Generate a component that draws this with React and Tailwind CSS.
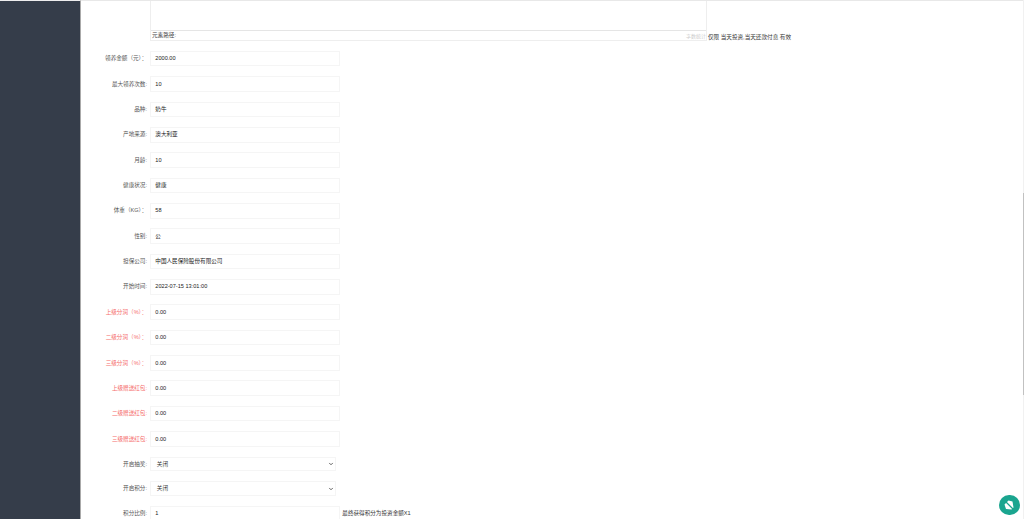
import React from 'react';
import { ChevronDown } from 'lucide-react';

const rows = [
  { label: '领养金额（元）：', value: '2000.00' },
  { label: '最大领养次数:', value: '10' },
  { label: '品种:', value: '奶牛' },
  { label: '产地来源:', value: '澳大利亚' },
  { label: '月龄:', value: '10' },
  { label: '健康状况:', value: '健康' },
  { label: '体重（KG）：', value: '58' },
  { label: '性别:', value: '公' },
  { label: '担保公司:', value: '中国人民保险股份有限公司' },
  { label: '开始时间:', value: '2022-07-15 13:01:00' },
  { label: '上级分润（%）：', value: '0.00', red: true },
  { label: '二级分润（%）：', value: '0.00', red: true },
  { label: '三级分润（%）：', value: '0.00', red: true },
  { label: '上级赠送红包:', value: '0.00', red: true },
  { label: '二级赠送红包:', value: '0.00', red: true },
  { label: '三级赠送红包:', value: '0.00', red: true },
  { label: '开启抽奖:', value: '关闭', select: true },
  { label: '开启积分:', value: '关闭', select: true },
  { label: '积分比例:', value: '1', hint: '最终获得积分为投资金额X1' },
];

const Row = ({ label, value, red, select, hint }) => (
  <div className={`flex items-center shrink-0 ${select ? 'h-[24.6px]' : 'h-[25.35px]'}`}>
    <div className={`w-[66px] pt-[1px] text-right whitespace-nowrap ${red ? 'text-[#f56c6c]' : 'text-[#555]'}`}>{label}</div>
    <div className="ml-[3.3px] flex items-center">
      {select ? (
        <div className="w-[185.5px] h-[14.5px] pl-[5.5px] pr-[1px] pt-[1px] border border-[#f5f5f5] flex items-center justify-between text-[#333]">
          <span>{value}</span>
          <ChevronDown size={6} strokeWidth={3} className="text-[#333]" />
        </div>
      ) : (
        <div className="w-[190px] h-[15.6px] pl-[4px] pt-[1px] border border-[#f5f5f5] flex items-center text-[#222]">{value}</div>
      )}
      {hint && <span className="ml-[2px] pt-[1px] text-[#333] whitespace-nowrap">{hint}</span>}
    </div>
  </div>
);

export default function App() {
  return (
    <div className="flex h-[519px] overflow-hidden bg-white text-[5.6px] leading-none font-['Liberation_Sans','Noto_Sans_CJK_SC',sans-serif]">
      <aside className="w-[80px] shrink-0 bg-[#353d4a] border-t border-[#eee]" />
      <main className="relative flex-1 border-l border-[#aaa] border-t border-t-[#e8e8e8]">
        <div className="flex items-end pl-[69px]">
          <div className="w-[557px] h-[40px] flex flex-col border-x border-[#eee]">
            <div className="h-[30px] border-b border-[#e5e5e5]" />
            <div className="relative flex-1 flex items-center pl-[1px] pt-[1px] border-b border-[#eee] text-[#444]">
              元素路径:
              <span className="absolute right-0 top-[3px] text-[5px] text-[#ccc]">字数统计</span>
            </div>
          </div>
          <span className="ml-[1px] text-[#333] whitespace-nowrap">仅限 当天投资,当天还款付息 有效</span>
        </div>
        <div className="flex flex-col mt-[5px]">
          {rows.map((r) => (
            <Row key={r.label} {...r} />
          ))}
        </div>
        <div className="absolute right-[3px] bottom-[4px] w-[20.5px] h-[20.5px] rounded-full bg-[#1aa58f] flex items-center justify-center">
          <svg width="12" height="12" viewBox="0 0 12 12">
            <path d="M1.5 5.5 L5.5 1.5 L9.5 2.5 L10.5 8.5 L8.5 10.5 L3 10 Z" fill="#fff" />
            <path d="M2 2 L10.5 10.5" stroke="#1aa58f" strokeWidth="1.2" />
          </svg>
        </div>
      </main>
      <div className="w-[1.5px] shrink-0 bg-[#f1f1f1] pt-[193px]">
        <div className="h-[202px] bg-[#c1c1c1]" />
      </div>
    </div>
  );
}
